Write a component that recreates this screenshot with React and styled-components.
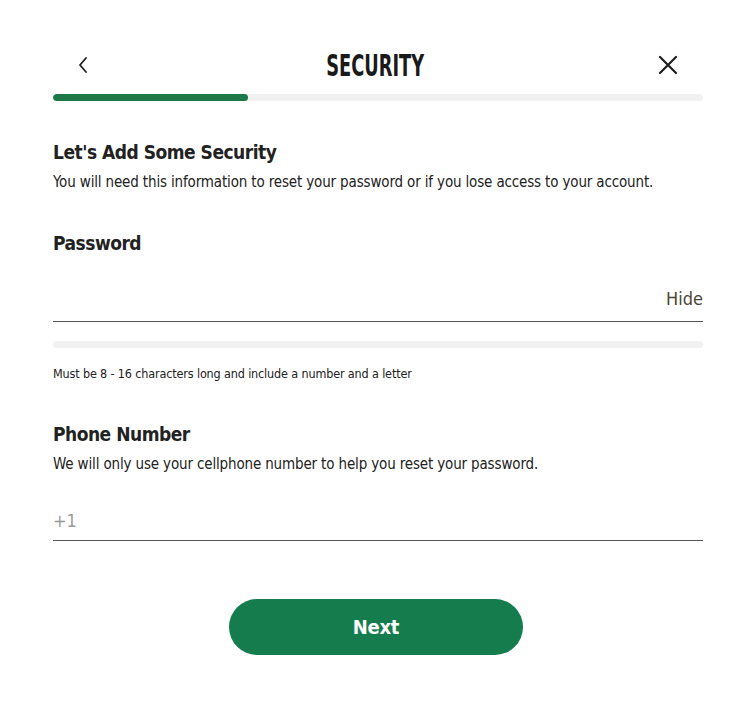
import React from 'react';
import styled, { createGlobalStyle } from 'styled-components';

const GlobalStyle = createGlobalStyle`
  body {
    margin: 0;
    background: #ffffff;
    font-family: "DejaVu Sans Condensed", "Liberation Sans", sans-serif;
    color: #222222;
  }
`;

const Page = styled.div`
  width: 650px;
  margin: 0 37px 0 53px;
  padding-top: 44px;
  display: flex;
  flex-direction: column;
`;

const Header = styled.div`
  height: 42px;
  display: flex;
  align-items: center;
  justify-content: space-between;
  padding: 0 25px 0 20px;
`;

const IconButton = styled.button`
  width: 20px;
  height: 20px;
  padding: 0;
  border: 0;
  background: none;
  display: flex;
  align-items: center;
  justify-content: center;
  color: #1e1e1e;
`;

const Title = styled.h1`
  margin: 0;
  font-family: "DejaVu Sans Condensed", sans-serif;
  font-weight: 700;
  font-size: 30px;
  color: #1a1a1a;
  transform: scaleX(0.66);
`;

const Track = styled.div`
  height: 7px;
  margin-top: ${props => props.top || 0}px;
  border-radius: 4px;
  background: #f1f1f1;
  overflow: hidden;
`;

const Fill = styled.div`
  height: 100%;
  border-radius: 4px;
  background: #1d7a48;
`;

const Heading = styled.h2`
  margin: ${props => props.top}px 0 0;
  font-size: 19px;
  font-weight: 700;
  letter-spacing: -0.5px;
  line-height: 24px;
  color: #222222;
`;

const Text = styled.p`
  margin: ${props => props.top || 0}px 0 0;
  font-size: ${props => props.size || 15}px;
  letter-spacing: -0.15px;
  line-height: 20px;
  color: #222222;
`;

const Field = styled.div`
  margin-top: ${props => props.top}px;
  height: 40px;
  box-sizing: border-box;
  padding-bottom: ${props => props.pad || 12}px;
  display: flex;
  align-items: flex-end;
  justify-content: space-between;
  border-bottom: 1px solid #555555;
  line-height: 20px;
`;

const Placeholder = styled.span`
  font-size: 18px;
  color: #9a9a9a;
`;

const Toggle = styled.span`
  font-size: 18px;
  color: #4d4434;
`;

const Actions = styled.div`
  margin-top: 58px;
  display: flex;
  justify-content: center;
  padding-right: 4px;
`;

const NextButton = styled.button`
  width: 294px;
  height: 56px;
  border: 0;
  border-radius: 28px;
  background: #157c4e;
  color: #ffffff;
  font-family: "DejaVu Sans Condensed", sans-serif;
  font-size: 20px;
  font-weight: 700;
  letter-spacing: -0.3px;
`;

export default function App() {
  return (
    <>
      <GlobalStyle />
      <Page>
        <Header>
          <IconButton aria-label="Back">
            <svg width="12" height="18" viewBox="0 0 12 18" fill="none">
              <path d="M9 2L3 9l6 7" stroke="currentColor" strokeWidth="1.8" strokeLinecap="round" strokeLinejoin="round" />
            </svg>
          </IconButton>
          <Title>SECURITY</Title>
          <IconButton aria-label="Close">
            <svg width="20" height="20" viewBox="0 0 20 20" fill="none">
              <path d="M2 2l16 16M18 2L2 18" stroke="currentColor" strokeWidth="2.2" strokeLinecap="round" />
            </svg>
          </IconButton>
        </Header>
        <Track top={8}>
          <Fill style={{ width: '30%' }} />
        </Track>

        <Heading top={39}>Let's Add Some Security</Heading>
        <Text top={8}>You will need this information to reset your password or if you lose access to your account.</Text>

        <Heading top={39}>Password</Heading>
        <Field top={27}>
          <span />
          <Toggle>Hide</Toggle>
        </Field>
        <Track top={19} />
        <Text top={16} size={12.5}>Must be 8 - 16 characters long and include a number and a letter</Text>

        <Heading top={38}>Phone Number</Heading>
        <Text top={8}>We will only use your cellphone number to help you reset your password.</Text>
        <Field top={27} pad={9}>
          <Placeholder>+1</Placeholder>
        </Field>

        <Actions>
          <NextButton>Next</NextButton>
        </Actions>
      </Page>
    </>
  );
}
